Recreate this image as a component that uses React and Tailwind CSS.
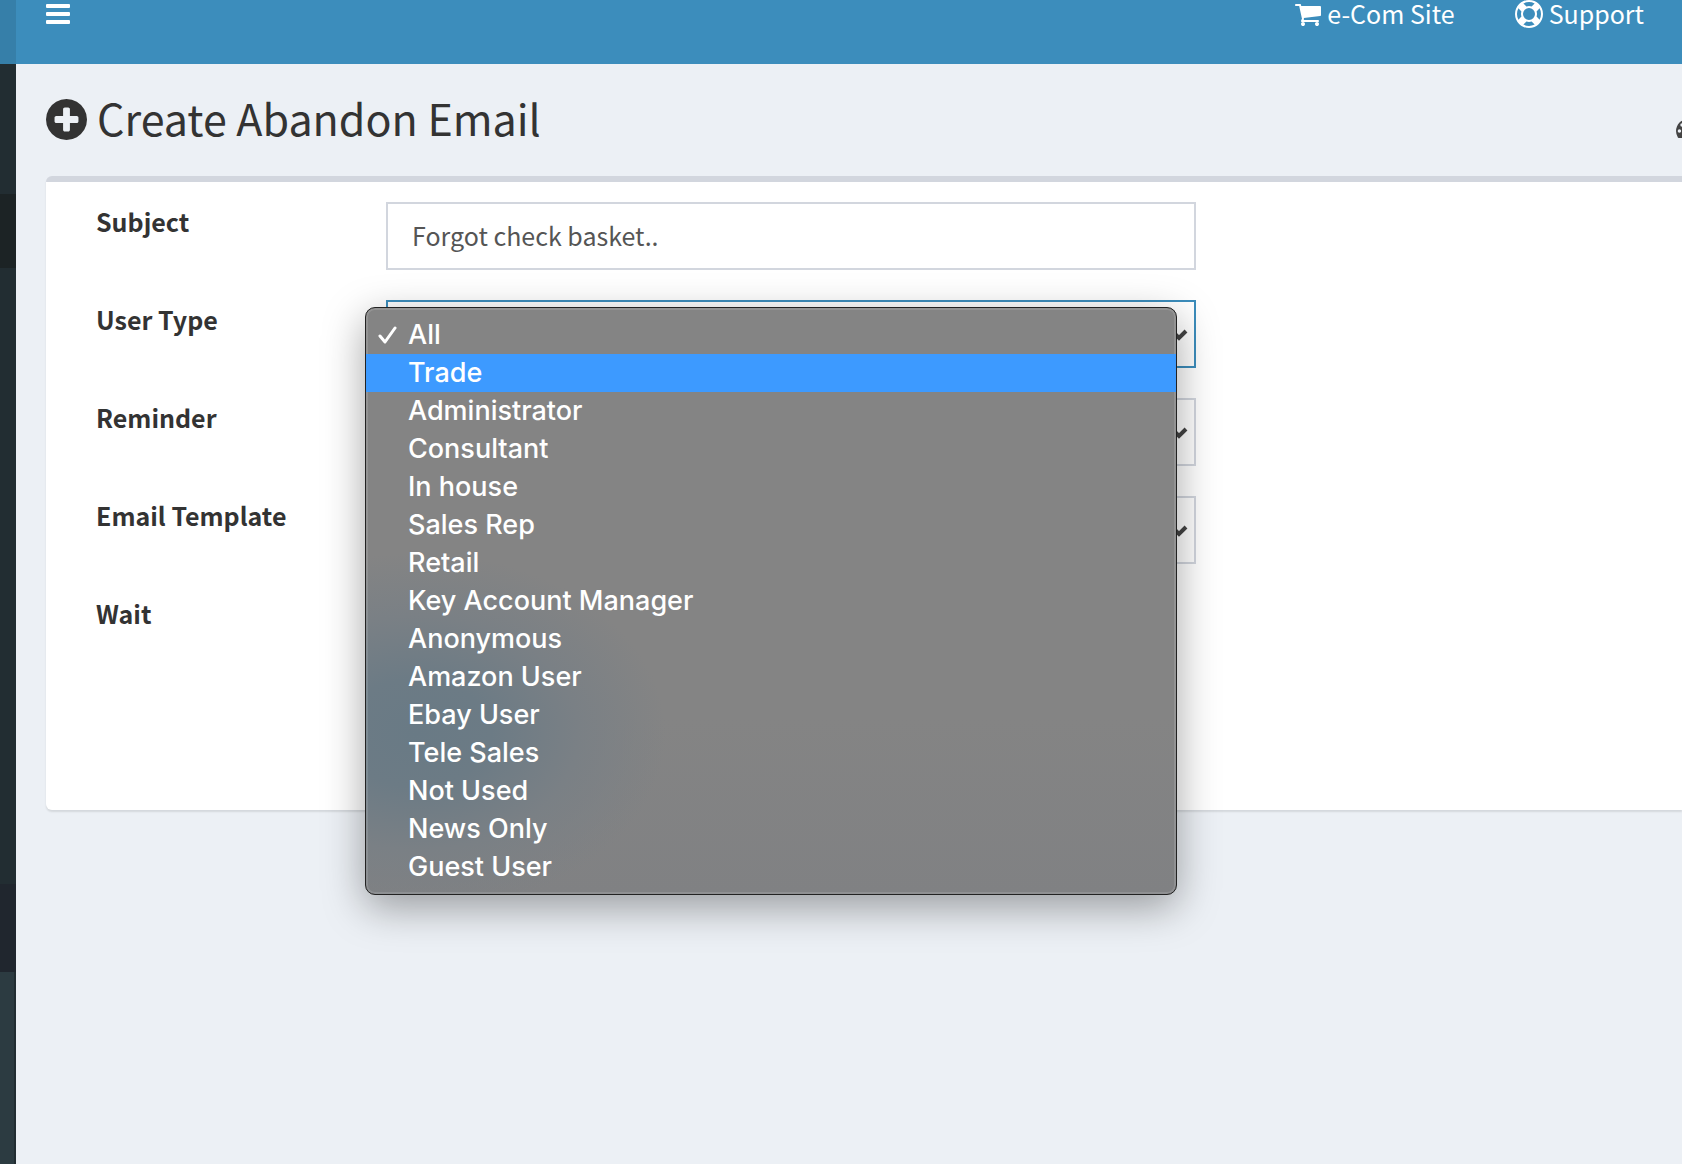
import { useState } from 'react';

const userTypes = [
  'All',
  'Trade',
  'Administrator',
  'Consultant',
  'In house',
  'Sales Rep',
  'Retail',
  'Key Account Manager',
  'Anonymous',
  'Amazon User',
  'Ebay User',
  'Tele Sales',
  'Not Used',
  'News Only',
  'Guest User',
];

function BarsIcon({ className }) {
  return (
    <svg viewBox="0 0 24 20" fill="currentColor" className={className} aria-hidden="true">
      <rect width="24" height="4" rx="1" />
      <rect y="8" width="24" height="4" rx="1" />
      <rect y="16" width="24" height="4" rx="1" />
    </svg>
  );
}

function CartIcon({ className }) {
  return (
    <svg viewBox="0 256 1664 1408" fill="currentColor" className={className} aria-hidden="true">
      <path d="M640 1536q0 52-38 90t-90 38-90-38-38-90 38-90 90-38 90 38 38 90zm896 0q0 52-38 90t-90 38-90-38-38-90 38-90 90-38 90 38 38 90zm128-1088v512q0 24-16.500 42.500t-40.500 21.500l-1044 122q13 60 13 70 0 16-24 64h920q26 0 45 19t19 45-19 45-45 19h-1024q-26 0-45-19t-19-45q0-11 8-31.500t16-36 21.500-40 15.500-29.500l-177-823h-204q-26 0-45-19t-19-45 19-45 45-19h256q16 0 28.500 6.500t19.500 15.500 13 24.500 8 26 5.500 29.500 4.500 26h1201q26 0 45 19t19 45z" />
    </svg>
  );
}

function LifeRingIcon({ className }) {
  return (
    <svg viewBox="0 0 1792 1792" fill="currentColor" className={className} aria-hidden="true">
      <path d="M896 0q182 0 348 71t286 191 191 286 71 348-71 348-191 286-286 191-348 71-348-71-286-191-191-286-71-348 71-348 191-286 286-191 348-71zm0 128q-190 0-361 90l194 194q82-28 167-28t167 28l194-194q-171-90-361-90zm-678 1129l194-194q-28-82-28-167t28-167l-194-194q-90 171-90 361t90 361zm678 407q190 0 361-90l-194-194q-82 28-167 28t-167-28l-194 194q171 90 361 90zm0-384q159 0 271.500-112.500t112.500-271.500-112.500-271.500-271.500-112.500-271.500 112.500-112.500 271.500 112.500 271.500 271.500 112.500zm484-217l194 194q90-171 90-361t-90-361l-194 194q28 82 28 167t-28 167z" />
    </svg>
  );
}

function PlusCircleIcon({ className }) {
  return (
    <svg viewBox="128 128 1536 1536" fill="currentColor" className={className} aria-hidden="true">
      <path d="M1344 960v-128q0-26-19-45t-45-19h-256v-256q0-26-19-45t-45-19h-128q-26 0-45 19t-19 45v256h-256q-26 0-45 19t-19 45v128q0 26 19 45t45 19h256v256q0 26 19 45t45 19h128q26 0 45-19t19-45v-256h256q26 0 45-19t19-45zm320-64q0 209-103 385.500t-279.500 279.500-385.500 103-385.500-103-279.500-279.500-103-385.500 103-385.500 279.500-279.500 385.500-103 385.500 103 279.500 279.500 103 385.500z" />
    </svg>
  );
}

function GaugeIcon({ className }) {
  return (
    <svg viewBox="0 256 1792 1408" className={className} aria-hidden="true">
      <path
        fill="currentColor"
        d="M1792 1152q0 261-141 483-19 29-54 29h-1402q-35 0-54-29-141-221-141-483 0-182 71-348t191-286 286-191 348-71 348 71 286 191 191 286 71 348z"
      />
      <g fill="#ecf0f5">
        <circle cx="256" cy="1152" r="128" />
        <circle cx="448" cy="704" r="128" />
        <circle cx="896" cy="512" r="128" />
        <circle cx="1344" cy="704" r="128" />
        <circle cx="1536" cy="1152" r="128" />
        <circle cx="896" cy="1280" r="160" />
      </g>
    </svg>
  );
}

function SelectField({ id, label, options, active, children }) {
  return (
    <div className="flex">
      <label htmlFor={id} className="w-[290px] shrink-0 pt-[3px] text-[25px] leading-8 font-bold">
        {label}
      </label>
      <div className="relative max-w-[810px] flex-1">
        <select
          id={id}
          className={`block h-[68px] w-full appearance-none border-2 bg-white px-6 text-[25px] text-[#555] outline-none ${
            active ? 'border-[#3c8dbc]' : 'border-[#d2d6de]'
          }`}
        >
          {options.map((option) => (
            <option key={option}>{option}</option>
          ))}
        </select>
        <svg
          viewBox="0 0 18 12"
          className="pointer-events-none absolute top-[29px] right-2 h-3 w-[18px]"
          fill="none"
          stroke="#444"
          strokeWidth="4"
          aria-hidden="true"
        >
          <path d="M2 2l7 7 7-7" />
        </svg>
        {children}
      </div>
    </div>
  );
}

function UserTypeMenu({ selected, highlighted, onHighlight, onSelect }) {
  return (
    <ul
      role="listbox"
      aria-label="User Type"
      className="absolute top-[7px] -left-[21px] z-10 w-[812px] rounded-[10px] border border-[#222] bg-[#848484] bg-[radial-gradient(ellipse_250px_180px_at_50px_425px,#697a85_0%,#6c7b85_30%,#7a8085_65%,transparent_100%),linear-gradient(to_bottom,#848484_70%,#808183_100%)] py-2 font-['Inter',sans-serif] text-[27px] leading-[38px] font-medium text-white shadow-[0_12px_42px_rgba(0,0,0,0.36),inset_0_0_0_2px_rgba(255,255,255,0.12)]"
    >
      {userTypes.map((type) => (
        <li
          key={type}
          role="option"
          aria-selected={type === selected}
          onMouseEnter={() => onHighlight(type)}
          onClick={() => onSelect(type)}
          className={`flex h-[38px] items-center ${type === highlighted ? 'bg-[#3d9aff]' : ''}`}
        >
          <span className="flex w-[42px] shrink-0 pl-3">
            {type === selected && (
              <svg viewBox="0 0 19 20" className="h-5 w-[19px]" fill="none" stroke="currentColor" strokeWidth="3" strokeLinecap="round" strokeLinejoin="round" aria-hidden="true">
                <path d="M2 11l5 6L17 3" />
              </svg>
            )}
          </span>
          {type}
        </li>
      ))}
    </ul>
  );
}

export default function App() {
  const [userType, setUserType] = useState('All');
  const [highlighted, setHighlighted] = useState('Trade');

  return (
    <div className="flex min-h-screen overflow-hidden bg-[#ecf0f5] font-['Source_Sans_Pro','Noto_Sans_CJK_SC',sans-serif] text-[#333]">
      {/* Sidebar edge */}
      <aside className="flex w-4 shrink-0 flex-col bg-[#222d32]">
        <div className="h-16 bg-[#367fa9]" />
        <div className="mt-[130px] h-[74px] bg-[#1c2325]" />
        <div className="mt-[616px] h-[88px] bg-[#20262e]" />
        <div className="mr-[2px] flex-1 bg-[#2c3b41]" />
      </aside>

      <div className="min-w-0 flex-1">
        {/* Top bar */}
        <header className="flex h-16 items-start justify-between bg-[#3c8dbc] pr-[38px] pl-[30px] text-white">
          <button type="button" aria-label="Toggle navigation" className="pt-1">
            <BarsIcon className="h-5 w-6" />
          </button>
          <nav className="flex gap-[60px] text-[25px] leading-[26px]">
            <a href="#site" className="flex items-start gap-[6px]">
              <CartIcon className="mt-1 h-[22px] w-[26px]" />
              e-Com Site
            </a>
            <a href="#support" className="flex items-start gap-[6px]">
              <LifeRingIcon className="h-7 w-7" />
              Support
            </a>
          </nav>
        </header>

        <main className="pl-[30px]">
          <div className="flex h-28 items-center justify-between pb-[6px]">
            <h1 className="flex items-center gap-[10px] text-[43px] leading-[48px]">
              <PlusCircleIcon className="mt-1 h-[41px] w-[41px]" />
              Create Abandon Email
            </h1>
            <GaugeIcon className="mt-[22px] -mr-[18px] h-[19px] w-6 shrink-0 text-[#444]" />
          </div>

          {/* Form card */}
          <form className="flex min-h-[634px] flex-col gap-[30px] rounded-l-md border-t-6 border-[#d2d6de] bg-white pt-5 pr-12 pl-[50px] shadow-[0_2px_2px_rgba(0,0,0,0.1)]">
            <div className="flex">
              <label htmlFor="subject" className="w-[290px] shrink-0 pt-[3px] text-[25px] leading-8 font-bold">
                Subject
              </label>
              <input
                id="subject"
                type="text"
                defaultValue="Forgot check basket.."
                className="h-[68px] max-w-[810px] min-w-0 flex-1 border-2 border-[#d2d6de] bg-white px-6 pb-[2px] text-[25px] text-[#555] outline-none"
              />
            </div>
            <SelectField id="user-type" label="User Type" options={userTypes} active>
              <UserTypeMenu
                selected={userType}
                highlighted={highlighted}
                onHighlight={setHighlighted}
                onSelect={setUserType}
              />
            </SelectField>
            <SelectField id="reminder" label="Reminder" options={[]} />
            <SelectField id="email-template" label="Email Template" options={[]} />
            <p className="pt-[3px] text-[25px] leading-8 font-bold">Wait</p>
          </form>
        </main>
      </div>
    </div>
  );
}
